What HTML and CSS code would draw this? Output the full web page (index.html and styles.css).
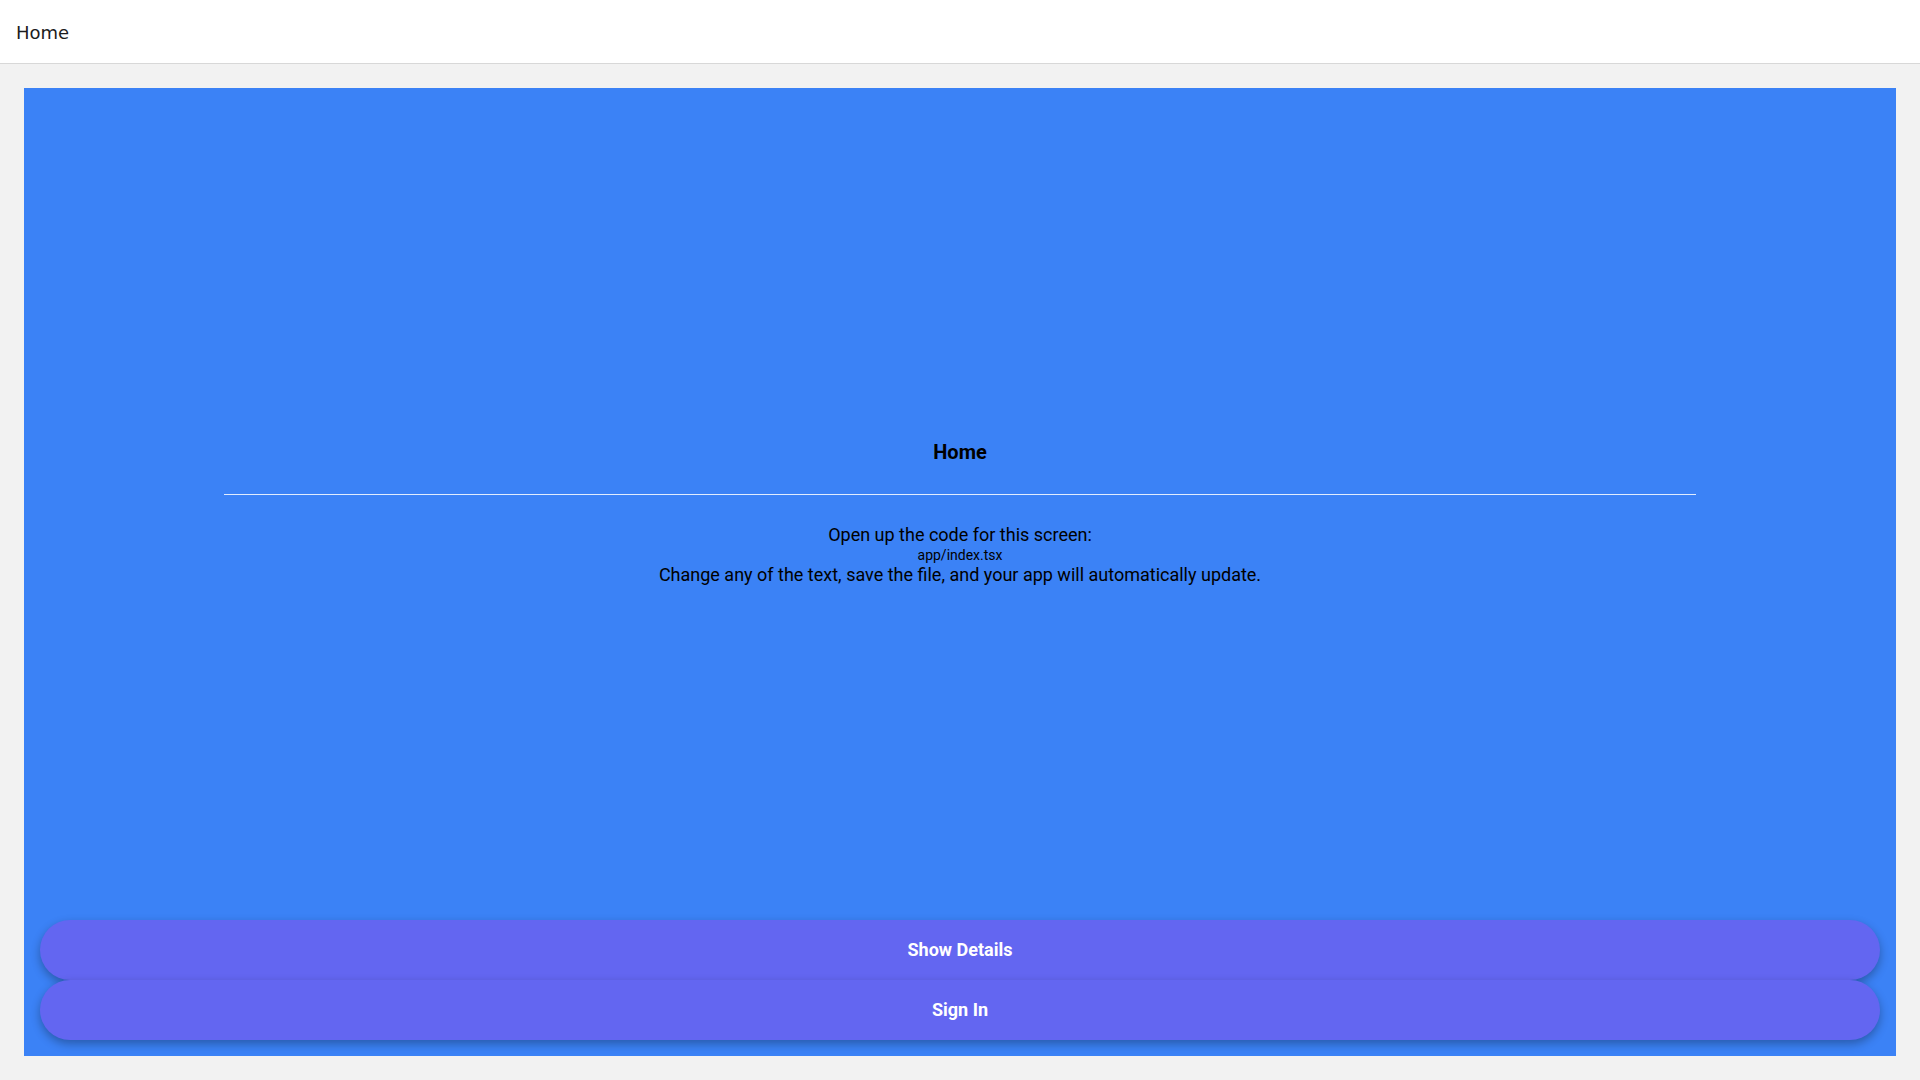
FILE: index.html
```html
<!DOCTYPE html>
<html lang="en">
<head>
<meta charset="utf-8">
<title>Home</title>
<link rel="stylesheet" href="styles.css">
</head>
<body>
<header class="topbar">
  <span class="topbar-title">Home</span>
</header>
<main class="page">
  <section class="panel">
    <div class="content">
      <h1 class="title">Home</h1>
      <div class="separator"></div>
      <p class="line">Open up the code for this screen:</p>
      <p class="line code">app/index.tsx</p>
      <p class="line">Change any of the text, save the file, and your app will automatically update.</p>
    </div>
    <div class="actions">
      <button class="btn">Show Details</button>
      <button class="btn">Sign In</button>
    </div>
  </section>
</main>
</body>
</html>
```

FILE: styles.css
```css
* { box-sizing: border-box; }
html, body {
  margin: 0;
  padding: 0;
  height: 100%;
}
body {
  background: #f2f2f2;
  font-family: Roboto, "Liberation Sans", sans-serif;
  display: flex;
  flex-direction: column;
}
.topbar {
  height: 64px;
  flex: 0 0 64px;
  background: #ffffff;
  border-bottom: 1px solid #d8d8d8;
  display: flex;
  align-items: center;
  padding: 0 16px;
}
.topbar-title {
  font-family: "DejaVu Sans", sans-serif;
  font-size: 18px;
  color: #1c1c1e;
  line-height: 1;
  margin-top: 2px;
}
.page {
  flex: 1;
  padding: 24px;
  display: flex;
}
.panel {
  flex: 1;
  background: #3b82f6;
  padding: 16px;
  display: flex;
  flex-direction: column;
}
.content {
  flex: 1;
  display: flex;
  flex-direction: column;
  align-items: center;
  justify-content: center;
  color: #000;
}
.title {
  margin: 0;
  font-size: 20px;
  line-height: 24px;
  font-weight: 700;
}
.separator {
  width: 80%;
  height: 1px;
  background: rgba(255, 255, 255, 0.85);
  margin: 30px 0;
}
.line {
  margin: 0;
  font-size: 18px;
  line-height: 20px;
  text-align: center;
}
.line.code {
  font-size: 14px;
}
.actions {
  display: flex;
  flex-direction: column;
}
.btn {
  height: 60px;
  border: none;
  border-radius: 30px;
  background: #6366f1;
  color: #ffffff;
  font-family: Roboto, "Liberation Sans", sans-serif;
  font-size: 18px;
  font-weight: 700;
  box-shadow: 0 4px 10px rgba(0, 0, 0, 0.3);
  padding: 0 0 2px;
}
```
